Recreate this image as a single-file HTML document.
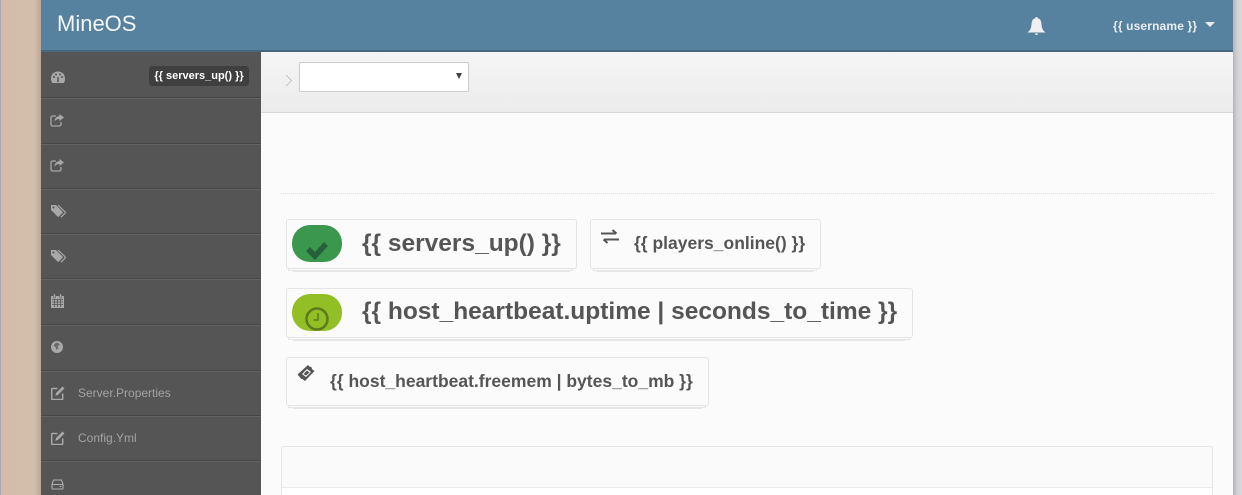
<!DOCTYPE html>
<html><head><meta charset="utf-8"><style>
html,body{margin:0;padding:0;width:1242px;height:495px;overflow:hidden;font-family:"Liberation Sans",sans-serif;background:#fafafa}
div,span,svg{position:absolute;box-sizing:border-box;white-space:nowrap}
#w{left:0;top:0;width:1242px;height:495px;overflow:hidden;background:#fbfbfb}
.sep{left:41px;width:220px;height:2px;background:#484848;border-bottom:1px solid #636363}
.ic{left:50px}
.lbl{left:78px;font-size:12px;color:#a3a3a3;line-height:14px}
.card{background:#fbfbfb;border:1px solid #e4e4e4;border-radius:3px}
.l1,.l2{background:#fbfbfb;border:1px solid #e6e6e6;border-top:0}
.l1{height:3px}.l2{height:2px}
.t{font-weight:bold;color:#555;line-height:26px}
</style></head><body><div id="w">
<div style="left:0;top:0;width:1px;height:495px;background:#a9a9ad"></div>
<div style="left:1px;top:0;width:40px;height:495px;background:linear-gradient(90deg,#d3bcaa 0,#d3bdab 34px,#b9a697 40px)"></div>
<div style="left:1233px;top:0;width:9px;height:495px;background:linear-gradient(90deg,#b5b5b9,#d0d0d3 4px,#dcdce0)"></div>

<div style="left:41px;top:0;width:1192px;height:52px;background:#57829f;border-bottom:2px solid #47697f"></div>
<div style="left:57px;top:10px;font-size:22px;line-height:28px;color:#f4f7f9">MineOS</div>
<svg style="left:1026px;top:16px" width="21" height="20" viewBox="0 0 21 20"><path d="M10.500 1c.8 0 1.200.5 1.300 1.200 2.700.7 3.500 3 3.700 6 .2 3.500.8 5.500 4 8.300H1.500c3.200-2.800 3.800-4.800 4-8.300.2-3 1-5.300 3.700-6C9.300 1.500 9.700 1 10.500 1zM8.800 17.500h3.400c-.2 1-.9 1.500-1.700 1.500s-1.500-.5-1.700-1.500z" fill="#f0f0f2"/></svg>
<div style="left:1113px;top:19px;font-size:12px;font-weight:bold;line-height:14px;color:#e8eef2;letter-spacing:.15px">{{ username }}</div>
<div style="left:1205px;top:22px;width:0;height:0;border-left:5px solid transparent;border-right:5px solid transparent;border-top:5px solid #e8eef2"></div>

<div style="left:41px;top:52px;width:220px;height:443px;background:#555"></div>
<div class="sep" style="top:97px"></div><div class="sep" style="top:143px"></div><div class="sep" style="top:188px"></div><div class="sep" style="top:233px"></div><div class="sep" style="top:278px"></div><div class="sep" style="top:324px"></div><div class="sep" style="top:370px"></div><div class="sep" style="top:415px"></div><div class="sep" style="top:460px"></div>

<svg class="ic" style="top:71px" width="16" height="13" viewBox="0 0 16 13"><path d="M8 .5C3.600.5 1 3.800 1 7.500c0 2 .6 3.700 1.300 4.500h11.400c.7-.8 1.300-2.500 1.300-4.500C15 3.800 12.400.5 8 .5z" fill="#a8a8a8"/><path d="M8 11V6" stroke="#555" stroke-width="1.500"/><circle cx="4" cy="6" r="1" fill="#555"/><circle cx="12" cy="6" r="1" fill="#555"/><circle cx="6" cy="3.500" r="1" fill="#555"/><circle cx="10" cy="3.500" r="1" fill="#555"/></svg>
<div style="left:149px;top:66px;width:100px;height:20px;background:#3f3f3f;border-radius:3px;color:#fff;font-size:11px;font-weight:bold;line-height:20px;text-align:center">{{ servers_up() }}</div>

<svg class="ic" style="top:113px" width="15" height="14" viewBox="0 0 15 14"><path d="M6 3H2.500A1.500 1.500 0 0 0 1 4.500v7A1.500 1.500 0 0 0 2.500 13h7a1.500 1.500 0 0 0 1.500-1.500V9" fill="none" stroke="#a8a8a8" stroke-width="1.300"/><path d="M9.500 1L14 4.500 9.500 8V6C7 6 5.500 7 4.500 9 4.500 5.500 6.500 3.300 9.500 3z" fill="#a8a8a8"/></svg>
<svg class="ic" style="top:158px" width="15" height="14" viewBox="0 0 15 14"><path d="M6 3H2.500A1.500 1.500 0 0 0 1 4.500v7A1.500 1.500 0 0 0 2.500 13h7a1.500 1.500 0 0 0 1.500-1.500V9" fill="none" stroke="#a8a8a8" stroke-width="1.300"/><path d="M9.500 1L14 4.500 9.500 8V6C7 6 5.500 7 4.500 9 4.500 5.500 6.500 3.300 9.500 3z" fill="#a8a8a8"/></svg>
<svg class="ic" style="top:204px" width="16" height="14" viewBox="0 0 16 14"><path d="M1 1h5l6.500 6.500a1 1 0 0 1 0 1.400l-3.600 3.600a1 1 0 0 1-1.400 0L1 6z" fill="#a8a8a8"/><circle cx="3.500" cy="3.500" r="1" fill="#555"/><path d="M8 1l7 6.800c.4.400.4 1 0 1.400l-4 4" fill="none" stroke="#a8a8a8" stroke-width="1.200"/></svg>
<svg class="ic" style="top:249px" width="16" height="14" viewBox="0 0 16 14"><path d="M1 1h5l6.500 6.500a1 1 0 0 1 0 1.400l-3.600 3.600a1 1 0 0 1-1.400 0L1 6z" fill="#a8a8a8"/><circle cx="3.500" cy="3.500" r="1" fill="#555"/><path d="M8 1l7 6.800c.4.400.4 1 0 1.400l-4 4" fill="none" stroke="#a8a8a8" stroke-width="1.200"/></svg>
<svg class="ic" style="top:294px;left:51px" width="13" height="14" viewBox="0 0 13 14"><rect x="0" y="2" width="13" height="12" fill="#a8a8a8"/><rect x="2.500" y="0" width="2" height="4" fill="#a8a8a8" stroke="#555" stroke-width=".5"/><rect x="8.500" y="0" width="2" height="4" fill="#a8a8a8" stroke="#555" stroke-width=".5"/><path d="M1 5.500h11M1 8h11M1 10.500h11M3.500 5v8M6.500 5v8M9.500 5v8" stroke="#555" stroke-width=".8"/></svg>
<svg class="ic" style="top:341px;left:51px" width="12" height="12" viewBox="0 0 12 12"><circle cx="6" cy="6" r="6" fill="#a8a8a8"/><path d="M6 1.500C8 2.500 9 3 8.500 4.500L6.500 5 7.500 7 5.500 9 4.500 6 2.500 4.500 4 2.500z" fill="#555" opacity=".75"/></svg>
<svg class="ic" style="top:386px;left:51px" width="14" height="14" viewBox="0 0 14 14"><path d="M6.500 2.500H1.500a.8.8 0 0 0-.8.8v9.400a.8.8 0 0 0 .8.800h9.400a.8.800 0 0 0 .8-.8V7.500" fill="none" stroke="#a8a8a8" stroke-width="1.500"/><path d="M11.500.5l2 2-6.500 6.500-2.700.7.700-2.700z" fill="#a8a8a8"/></svg>
<div class="lbl" style="top:386px">Server.Properties</div>
<svg class="ic" style="top:431px;left:51px" width="14" height="14" viewBox="0 0 14 14"><path d="M6.500 2.500H1.500a.8.8 0 0 0-.8.8v9.400a.8.8 0 0 0 .8.800h9.400a.8.800 0 0 0 .8-.8V7.500" fill="none" stroke="#a8a8a8" stroke-width="1.500"/><path d="M11.500.5l2 2-6.500 6.500-2.700.7.700-2.700z" fill="#a8a8a8"/></svg>
<div class="lbl" style="top:431px">Config.Yml</div>
<svg class="ic" style="top:479px;left:51px" width="13" height="11" viewBox="0 0 13 11"><path d="M2.500 1h8L12 5.500V9a1 1 0 0 1-1 1H2a1 1 0 0 1-1-1V5.500zM1 5.500h11" fill="none" stroke="#b0b0b0" stroke-width="1.100"/><rect x="8.500" y="7" width="2" height="1" fill="#b0b0b0"/></svg>

<div style="left:261px;top:52px;width:972px;height:61px;background:linear-gradient(#f5f5f5,#ececec);border-bottom:1px solid #d6d6d6"></div>
<svg style="left:285px;top:74px" width="8" height="13" viewBox="0 0 8 13"><path d="M1 1l5.500 5.500L1 12" fill="none" stroke="#b8b8b8" stroke-width=".8"/></svg>
<div style="left:299px;top:62px;width:170px;height:30px;background:#fff;border:1px solid #ccc;border-radius:2px"></div>
<div style="left:456px;top:73px;width:0;height:0;border-left:3px solid transparent;border-right:3px solid transparent;border-top:6px solid #444"></div>

<div style="left:281px;top:193px;width:933px;height:0;border-top:1px dotted #e2e2e2"></div>

<div class="l2" style="left:293px;top:270px;width:277px"></div><div class="l1" style="left:288px;top:268px;width:285px"></div>
<div class="card" style="left:286px;top:219px;width:291px;height:50px"></div>
<div style="left:292px;top:225px;width:50px;height:37px;border-radius:18px;background:#3a974d"></div>
<svg style="left:304px;top:238px" width="26" height="24" viewBox="0 0 26 24"><path d="M2 13l4-4 5 5L20 4l4 4-13 14z" fill="#26603a"/></svg>
<div class="t" style="left:362px;top:231px;font-size:24.500px">{{ servers_up() }}</div>

<div class="l2" style="left:597px;top:270px;width:216px"></div><div class="l1" style="left:593px;top:268px;width:224px"></div>
<div class="card" style="left:590px;top:219px;width:231px;height:50px"></div>
<svg style="left:600px;top:229px" width="20" height="15" viewBox="0 0 20 15"><path d="M1 4.500h15M12.500 1l4 3.500M19 10.500H4M7.500 14l-4-3.500" fill="none" stroke="#555" stroke-width="2"/></svg>
<div class="t" style="left:634px;top:230px;font-size:17.500px">{{ players_online() }}</div>

<div class="l2" style="left:293px;top:339px;width:612px"></div><div class="l1" style="left:288px;top:337px;width:622px"></div>
<div class="card" style="left:286px;top:288px;width:627px;height:50px"></div>
<div style="left:292px;top:294px;width:50px;height:37px;border-radius:18px;background:#93bf26"></div>
<svg style="left:304px;top:306px" width="26" height="26" viewBox="0 0 26 26"><circle cx="13" cy="13" r="10.500" fill="none" stroke="#5e7a1c" stroke-width="2.500"/><path d="M14 7v7H9.500" fill="none" stroke="#5e7a1c" stroke-width="1.500"/></svg>
<div class="t" style="left:362px;top:299px;font-size:24.500px">{{ host_heartbeat.uptime | seconds_to_time }}</div>

<div class="l2" style="left:293px;top:407px;width:409px"></div><div class="l1" style="left:288px;top:405px;width:418px"></div>
<div class="card" style="left:286px;top:357px;width:423px;height:49px"></div>
<svg style="left:297px;top:364px" width="19" height="19" viewBox="0 0 19 19"><path d="M1 10L11 1l1.500 1.500c.5.500.5.500 1 0L15 4c-.3.800-.3 1 .5 1.500L17.500 7 8 17l-2-1.500c-.4-.7-1-.7-1.500-.3L1 11z" fill="#555"/><path d="M5 10l5-5 4 3-5 5z" fill="#fafafa"/><path d="M6.500 10l3.500-3.500 2.500 2-3.500 3z" fill="#555"/></svg>
<div class="t" style="left:330px;top:368px;font-size:17.500px">{{ host_heartbeat.freemem | bytes_to_mb }}</div>

<div style="left:281px;top:446px;width:932px;height:49px;background:#fafafa;border:1px solid #e6e6e6;border-bottom:0;border-radius:3px 3px 0 0"></div>
<div style="left:282px;top:487px;width:930px;height:8px;background:#fff;border-top:1px solid #ececec"></div>
</div></body></html>
